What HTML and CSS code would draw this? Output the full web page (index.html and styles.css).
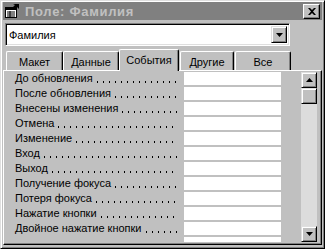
FILE: index.html
```html
<!DOCTYPE html>
<html lang="ru">
<head>
    <meta charset="UTF-8">
    <title>Поле: Фамилия</title>
    <link rel="stylesheet" href="styles.css">
</head>
<body>
    <div class="window">
        <div class="titlebar">
            <svg class="app-icon" width="16" height="16" viewBox="0 0 16 16">
                <rect x="1.5" y="4.5" width="11" height="10" fill="#fff" stroke="#000"/>
                <rect x="2" y="5" width="10" height="2" fill="#000"/>
                <path d="M3 9h8M3 11h8M3 13h8M6 8v6" stroke="#000" stroke-width="1"/>
                <path d="M9 1h6v5l-2-2-3 3-2-2 3-3z" fill="#000"/>
            </svg>
            <span class="title">Поле: Фамилия</span>
            <div class="close">
                <svg width="8" height="7" viewBox="0 0 8 7">
                    <path d="M0 0h2l2 2 2-2h2L5 3.5 8 7H6L4 5 2 7H0l3-3.5z" fill="#000"/>
                </svg>
            </div>
        </div>

        <div class="combo">
            <span class="combo-text">Фамилия</span>
            <span class="combo-btn">
                <svg width="7" height="4" viewBox="0 0 7 4"><path d="M0 0h7L3.5 4z" fill="#000"/></svg>
            </span>
        </div>

        <div class="tabs">
            <div class="tab tab-maket">Макет</div>
            <div class="tab tab-data">Данные</div>
            <div class="tab tab-events active">События</div>
            <div class="tab tab-other">Другие</div>
            <div class="tab tab-all">Все</div>
        </div>

        <div class="panel">
            <div class="list">
                <div class="row"><span class="label"><span class="name">До обновления</span><span class="leader"></span></span><span class="value"></span></div>
                <div class="row"><span class="label"><span class="name">После обновления</span><span class="leader"></span></span><span class="value"></span></div>
                <div class="row"><span class="label"><span class="name">Внесены изменения</span><span class="leader"></span></span><span class="value"></span></div>
                <div class="row"><span class="label"><span class="name">Отмена</span><span class="leader"></span></span><span class="value"></span></div>
                <div class="row"><span class="label"><span class="name">Изменение</span><span class="leader"></span></span><span class="value"></span></div>
                <div class="row"><span class="label"><span class="name">Вход</span><span class="leader"></span></span><span class="value"></span></div>
                <div class="row"><span class="label"><span class="name">Выход</span><span class="leader"></span></span><span class="value"></span></div>
                <div class="row"><span class="label"><span class="name">Получение фокуса</span><span class="leader"></span></span><span class="value"></span></div>
                <div class="row"><span class="label"><span class="name">Потеря фокуса</span><span class="leader"></span></span><span class="value"></span></div>
                <div class="row"><span class="label"><span class="name">Нажатие кнопки</span><span class="leader"></span></span><span class="value"></span></div>
                <div class="row"><span class="label"><span class="name">Двойное нажатие кнопки</span><span class="leader"></span></span><span class="value"></span></div>
                <div class="row"><span class="label"></span><span class="value"></span></div>
            </div>
            <div class="scrollbar">
                <div class="sb-btn">
                    <svg width="7" height="4" viewBox="0 0 7 4"><path d="M3.5 0L7 4H0z" fill="#000"/></svg>
                </div>
                <div class="sb-thumb"></div>
                <div class="sb-track"></div>
                <div class="sb-btn">
                    <svg width="7" height="4" viewBox="0 0 7 4"><path d="M0 0h7L3.5 4z" fill="#000"/></svg>
                </div>
            </div>
        </div>
    </div>
</body>
</html>
```

FILE: styles.css
```css
body{
    margin: 0;
    background: #c0c0c0;
}

.window{
    width: 325px;
    height: 249px;
    box-sizing: border-box;
    background: #c0c0c0;
    border: 1px solid;
    border-color: #dfdfdf #000 #000 #dfdfdf;
    box-shadow: inset 1px 1px #fff, inset -1px -1px #808080;
    padding: 1px 2px 2px 2px;
    display: flex;
    flex-direction: column;
    overflow: hidden;
    font-family: "Liberation Sans", Arial, sans-serif;
    font-size: 11px;
    color: #000;
}

/* title bar */
.titlebar{
    height: 18px;
    flex: none;
    background: #808080;
    display: flex;
    align-items: center;
    padding: 0 2px 0 1px;
}
.app-icon{
    flex: none;
    margin-right: 5px;
}
.title{
    font-weight: bold;
    font-size: 13px;
    letter-spacing: 0.7px;
    color: #c0c0c0;
    white-space: nowrap;
}
.close{
    margin-left: auto;
    width: 17px;
    height: 15px;
    box-sizing: border-box;
    background: #c0c0c0;
    border: 1px solid;
    border-color: #fff #000 #000 #fff;
    box-shadow: inset -1px -1px #808080;
    display: flex;
    align-items: center;
    justify-content: center;
}

/* combo box */
.combo{
    flex: none;
    margin: 3px 0 0 2px;
    width: 285px;
    height: 23px;
    box-sizing: border-box;
    background: #fff;
    border: 1px solid;
    border-color: #808080 #fff #fff #808080;
    box-shadow: inset 1px 1px #000, inset -1px -1px #dfdfdf;
    display: flex;
    align-items: center;
    padding: 2px;
}
.combo-text{
    flex: 1;
    padding-left: 1px;
}
.combo-btn{
    width: 16px;
    height: 17px;
    box-sizing: border-box;
    background: #c0c0c0;
    border: 1px solid;
    border-color: #dfdfdf #000 #000 #dfdfdf;
    box-shadow: inset 1px 1px #fff, inset -1px -1px #808080;
    display: flex;
    align-items: center;
    justify-content: center;
}

/* tabs */
.tabs{
    flex: none;
    display: flex;
    align-items: flex-end;
    height: 21px;
    margin-top: 3px;
    padding-left: 3px;
    position: relative;
    z-index: 1;
}
.tab{
    height: 19px;
    box-sizing: border-box;
    border: 1px solid;
    border-bottom: none;
    border-color: #fff #000 #000 #fff;
    box-shadow: inset -1px 0 #808080;
    border-radius: 2px 2px 0 0;
    display: flex;
    align-items: center;
    justify-content: center;
    padding-top: 1px;
    background: #c0c0c0;
}
.tab-maket{ width: 57px; }
.tab-data{ width: 56px; }
.tab-events{ width: 60px; }
.tab-other{ width: 54px; margin-left: 1px; }
.tab-all{ width: 56px; margin-left: 1px; }
.tab.active{
    height: 22px;
    margin-bottom: -1px;
    padding-bottom: 3px;
}

/* property panel */
.panel{
    flex: 1;
    min-height: 0;
    margin-bottom: 1px;
    border: 1px solid;
    border-color: #fff #000 #000 #fff;
    box-shadow: inset -1px -1px #808080;
    padding: 1px 3px 2px 0;
    display: flex;
    overflow: hidden;
}
.list{
    width: 297px;
    padding-left: 9px;
    box-sizing: border-box;
    overflow: hidden;
}
.row{
    display: flex;
    height: 15px;
}
.label{
    display: flex;
    width: 165px;
    margin-right: 4px;
    height: 13px;
    line-height: 13px;
    padding-left: 2px;
    box-sizing: border-box;
}
.name{
    white-space: nowrap;
}
.leader{
    flex: 1;
    margin-left: 3px;
    background-image: linear-gradient(to right, #000 0 1px, transparent 1px 6px);
    background-size: 6px 2px;
    background-repeat: repeat-x;
    background-position: 1px 9px;
}
.value{
    width: 97px;
    height: 13px;
    margin-left: 2px;
    background: #fff;
}

/* scrollbar */
.scrollbar{
    width: 16px;
    display: flex;
    flex-direction: column;
    background: #dcdcdc;
}
.sb-btn, .sb-thumb{
    height: 16px;
    flex: none;
    box-sizing: border-box;
    background: #c0c0c0;
    border: 1px solid;
    border-color: #dfdfdf #000 #000 #dfdfdf;
    box-shadow: inset 1px 1px #fff, inset -1px -1px #808080;
    display: flex;
    align-items: center;
    justify-content: center;
}
.sb-track{
    flex: 1;
}
```
